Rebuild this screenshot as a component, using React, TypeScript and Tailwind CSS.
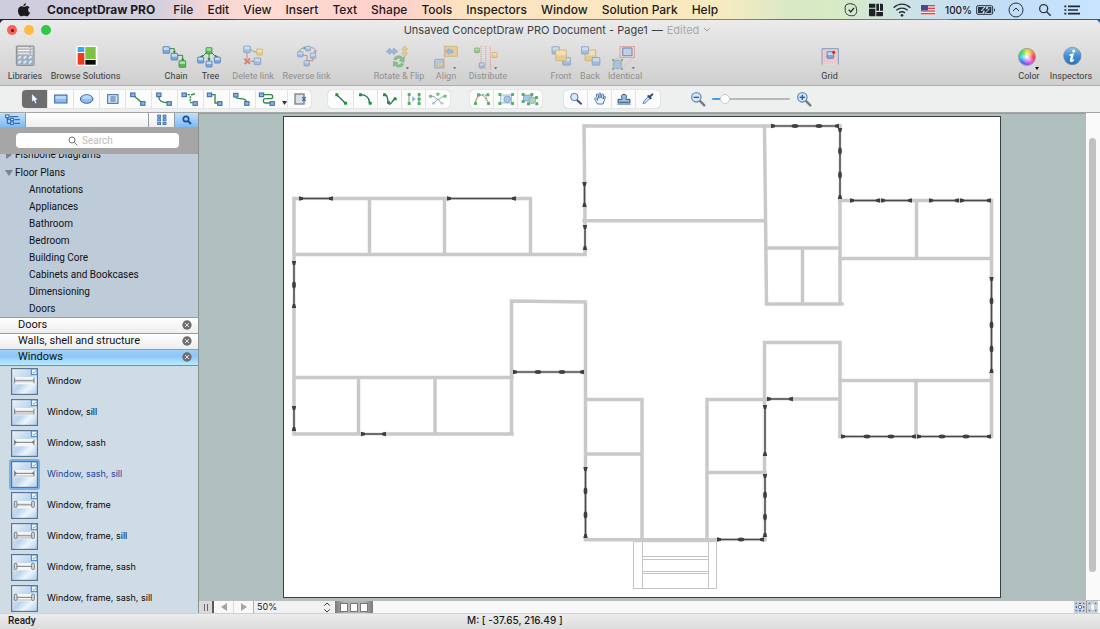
import React from 'react';

type Tone = 'blue' | 'green' | 'yellow';

const TONES: Record<Tone, [string, string, string]> = {
  blue: ['#7fa8dc', '#416fae', '#c5dbf3'],
  green: ['#58b858', '#2b7f35', '#a5e3a0'],
  yellow: ['#f0c15e', '#b98a2c', '#fbe3a8'],
};

function Node({ x, y, s = 18, tone = 'blue' }: { x: number; y: number; s?: number; tone?: Tone }) {
  const [fill, edge, light] = TONES[tone];
  return (
    <g>
      <rect x={x - s / 2} y={y - s / 2} width={s} height={s} rx={2} fill={fill} stroke={edge} strokeWidth={2} />
      <rect x={x - s / 2 + 2} y={y - s / 2 + 2} width={s - 4} height={s / 2 - 2} fill={light} />
    </g>
  );
}

function Caret({ x, y }: { x: number; y: number }) {
  return <path d={`M${x - 5} ${y - 3}h10l-5 6z`} fill="#222" />;
}

function BigIcon({ children }: { children: React.ReactNode }) {
  return (
    <svg viewBox="0 0 84 78" className="h-[26px] w-7 shrink-0" aria-hidden="true">
      {children}
    </svg>
  );
}

const green = { fill: 'none', stroke: '#2f8a3c', strokeWidth: 3 } as const;
const red = { fill: 'none', stroke: '#d2493c', strokeWidth: 3 } as const;

const LibrariesIcon = () => (
  <BigIcon>
    <rect x="16" y="6" width="53" height="58" rx="2" fill="#c9cdd1" stroke="#85888c" strokeWidth="3" />
    {[9, 17, 25].map((y) => (
      <g key={y}>
        <rect x="20" y={y} width="36" height="5" fill="#f5f5f5" stroke="#85888c" strokeWidth="1" />
        <rect x="59" y={y} width="7" height="5" fill="#f0f0f0" stroke="#85888c" strokeWidth="1" />
      </g>
    ))}
    <rect x="18" y="33" width="49" height="29" fill="#9fb0c2" />
    {[[26, 40], [42, 40], [58, 40], [26, 54], [42, 54], [58, 54]].map(([x, y]) => (
      <ellipse key={`${x}-${y}`} cx={x} cy={y} rx="7" ry="4" fill="#dcecfb" stroke="#7f97b0" transform={`rotate(-40 ${x} ${y})`} />
    ))}
  </BigIcon>
);

const BrowseIcon = () => (
  <BigIcon>
    <rect x="13" y="5" width="64" height="61" rx="6" fill="#fff" />
    <rect x="17" y="9" width="20" height="15" fill="#3da4f2" />
    <rect x="40" y="9" width="31" height="36" fill="#7dc242" />
    <rect x="17" y="27" width="20" height="35" fill="#ea3c1d" />
    <rect x="40" y="48" width="31" height="14" fill="#0b0b0b" />
  </BigIcon>
);

const ChainIcon = () => (
  <BigIcon>
    <path d="M22 14h15v10M46 34h16v14" {...green} />
    <path d="M32 22h10l-5 8zM57 44h10l-5 8z" fill="#2f8a3c" />
    <Node x={13} y={18} s={20} />
    <Node x={37} y={38} s={20} />
    <Node x={61} y={60} s={20} tone="green" />
  </BigIcon>
);

const TreeIcon = () => (
  <BigIcon>
    <path d="M30 24L16 38M36 28v22M42 24l14 14" {...green} />
    <path d="M8 38l10-6 1 9zM31 42h10l-5 9zM64 38l-10-6-1 9z" fill="#2f8a3c" />
    <Node x={36} y={20} tone="green" />
    <Node x={11} y={48} />
    <Node x={36} y={60} />
    <Node x={61} y={48} />
  </BigIcon>
);

const DeleteIcon = () => (
  <BigIcon>
    <path d="M33 17c8 0 8 8 20 7" {...green} />
    <path d="M24 27v18M32 52h13" {...red} />
    <path d="M16 44l17 15M33 43L17 60" fill="none" stroke="#d2493c" strokeWidth="6" />
    <Node x={24} y={16} s={20} />
    <Node x={62} y={24} tone="yellow" />
    <Node x={55} y={52} s={20} />
  </BigIcon>
);

const ReverseIcon = () => (
  <BigIcon>
    <path d="M20 22c0-8 6-10 14-10" {...green} />
    <path d="M32 6v12l8-6z" fill="#2f8a3c" />
    <path d="M54 11c9 0 13 3 13 12" fill="none" stroke="#c74fb0" strokeWidth="3" />
    <path d="M61 20h12l-6 8z" fill="#c74fb0" />
    <path d="M60 42v8H40M30 34h12v14" {...red} />
    <Node x={22} y={31} s={16} />
    <Node x={45} y={14} s={14} />
    <Node x={60} y={35} s={16} />
    <Node x={41} y={58} s={16} />
  </BigIcon>
);

const RotateIcon = () => (
  <BigIcon>
    <path d="M4 22l11-10v6h10v-6l13 10-13 10v-6H15v6z" fill="#6f9dd8" stroke="#416fae" strokeWidth="1.5" />
    <path d="M59 6l9 10h-5v12h5l-9 10-9-10h5V16h-5z" fill="#f0c15e" stroke="#b98a2c" strokeWidth="1.5" />
    <path d="M26 46c4-12 20-14 27-5l5-3-1 17-14-5 5-4c-5-6-13-3-14 2zM56 60c-4 11-19 12-26 4l-5 3 1-15 13 5-4 3c4 5 11 4 13-2z" fill="#4fb558" stroke="#2b7f35" strokeWidth="1.5" />
    <Caret x={67} y={73} />
  </BigIcon>
);

const AlignIcon = () => (
  <BigIcon>
    <rect x="39" y="7" width="37" height="30" rx="2" fill="#f0c15e" stroke="#b98a2c" strokeWidth="2" />
    <path d="M40 22l11-9v5h12v9H51v5z" fill="#6f9dd8" stroke="#416fae" />
    <rect x="8" y="46" width="26" height="26" rx="2" fill="#9fc1ea" stroke="#416fae" strokeWidth="2" />
    <path d="M36 60l-10-8v5H14v7h12v5z" fill="#f0c15e" stroke="#b98a2c" />
    <path d="M37 4v72" stroke="#e0544a" strokeWidth="2" strokeDasharray="4 2" />
    <Caret x={68} y={73} />
  </BigIcon>
);

const DistributeIcon = () => (
  <BigIcon>
    <path d="M21 6v70M35 6v70M49 6v70" stroke="#e0544a" strokeWidth="2" strokeDasharray="4 2" />
    <Node x={9} y={19} s={14} tone="green" />
    <Node x={62} y={33} s={15} tone="yellow" />
    <Node x={23} y={64} s={15} />
    <Caret x={65} y={73} />
  </BigIcon>
);

const FrontIcon = () => (
  <BigIcon>
    <Node x={26} y={19} s={22} />
    <Node x={59} y={52} s={23} />
    <Node x={42} y={34} s={32} tone="yellow" />
  </BigIcon>
);

const BackIcon = () => (
  <BigIcon>
    <Node x={43} y={34} s={32} tone="yellow" />
    <Node x={27} y={19} s={22} />
    <Node x={60} y={52} s={23} />
  </BigIcon>
);

const IdenticalIcon = () => (
  <BigIcon>
    <path d="M26 40L6 50M40 40l-8 10M70 40L34 72" stroke="#e0544a" strokeWidth="1.5" strokeDasharray="3 2" />
    <rect x="27" y="7" width="44" height="33" fill="#e9d3d3" stroke="#cf6058" strokeWidth="2" />
    <rect x="35" y="12" width="28" height="23" rx="2" fill="#a9c8ec" stroke="#4e6f9c" strokeWidth="4" />
    <circle cx="19" cy="61" r="13" fill="#8db4e2" stroke="#416fae" strokeWidth="2" />
    {[[6, 48], [32, 48], [6, 74], [32, 74]].map(([x, y]) => (
      <rect key={`${x}-${y}`} x={x - 3} y={y - 3} width="7" height="7" fill="#3fa647" />
    ))}
    <Caret x={67} y={73} />
  </BigIcon>
);

const GridIcon = () => (
  <BigIcon>
    <rect x="16" y="12" width="52" height="50" fill="#efd9d9" />
    {[17, 22, 27, 32, 37, 42, 47, 52, 57].map((y) => (
      <path key={y} d={`M17 ${y}h50`} stroke="#e09a98" strokeWidth="1" />
    ))}
    {[25, 33, 41, 49, 57].map((x) => (
      <path key={x} d={`M${x} 14v48`} stroke="#ecbcba" strokeWidth="1" />
    ))}
    <path d="M18 62V14h49v48" fill="none" stroke="#7d9fc4" strokeWidth="3" />
    <Node x={43} y={33} s={20} />
    <circle cx="53" cy="25" r="5" fill="#d8301e" />
  </BigIcon>
);

const ColorIcon = () => (
  <span className="relative flex h-[26px] w-7 items-center justify-center pr-1">
    <span className="size-[18px] rounded-full border border-[#9a9a9a] bg-[radial-gradient(circle,#ffffff_0%,#ffffff00_60%),conic-gradient(#e8e040,#ff9a30,#f03050,#f050e0,#9050f0,#4070f0,#30d0f0,#30e050,#e8e040)]" />
    <svg viewBox="0 0 6 4" className="absolute right-[3px] bottom-0 h-1 w-1.5" aria-hidden="true">
      <path d="M1 1h4L3 4z" fill="#111" />
    </svg>
  </span>
);

const InspectorsIcon = () => (
  <BigIcon>
    <defs>
      <linearGradient id="info" x1="0" y1="0" x2="0" y2="1">
        <stop offset="0" stopColor="#8cc4ee" />
        <stop offset="0.5" stopColor="#3b8fd6" />
        <stop offset="1" stopColor="#2a72c0" />
      </linearGradient>
    </defs>
    <circle cx="46" cy="36" r="26" fill="url(#info)" stroke="#77828c" strokeWidth="2" />
    <circle cx="50" cy="21" r="4.500" fill="#fff" />
    <path d="M38 31l13-3-5 20 6-3-1 5c-7 6-15 5-12-4l3-11-5 1z" fill="#fff" />
  </BigIcon>
);

function Tool({ label, icon, width, dim }: { label: string; icon: React.ReactNode; width: string; dim?: boolean }) {
  return (
    <button type="button" disabled={dim} className={`flex shrink-0 flex-col items-center ${width}`}>
      <span className={dim ? 'opacity-60' : ''}>{icon}</span>
      <span className={`font-[Roboto,sans-serif] text-[9px] leading-3 whitespace-nowrap ${dim ? 'text-[#8f8f8f]' : 'text-[#3a3a3a]'}`}>
        {label}
      </span>
    </button>
  );
}

function Cell({ label, children, active, width = 'w-6', last }: { label: string; children: React.ReactNode; active?: boolean; width?: string; last?: boolean }) {
  return (
    <button
      type="button"
      aria-label={label}
      className={`flex h-[18px] items-center justify-center ${width} ${active ? 'bg-[#6e6e6e]' : ''} ${last ? '' : 'border-r border-[#e3e3e3]'}`}
    >
      <svg viewBox="0 0 78 54" className="h-[18px] w-[26px] shrink-0">{children}</svg>
    </button>
  );
}

function CellGroup({ children }: { children: React.ReactNode }) {
  return <div className="flex shrink-0 overflow-hidden rounded bg-[#fcfcfc] shadow-[0_0_1px_rgba(0,0,0,0.35)]">{children}</div>;
}

const Pin = ({ x, y }: { x: number; y: number }) => (
  <rect x={x - 6} y={y - 5} width="13" height="11" fill="#8db4e2" stroke="#3566a8" strokeWidth="3" />
);
const Dot = ({ x, y }: { x: number; y: number }) => <rect x={x - 4} y={y - 4} width="9" height="9" rx="2" fill="#149a2c" />;
const line = { fill: 'none', stroke: '#2f8a48', strokeWidth: 4 } as const;
const ink = { fill: 'none', stroke: '#2c6a6e', strokeWidth: 4 } as const;

function Magnifier({ sign }: { sign?: 'plus' | 'minus' }) {
  return (
    <svg viewBox="0 0 48 48" className="size-4 shrink-0" aria-hidden="true">
      <path d="M29 29l14 14" stroke="#707a86" strokeWidth="7" strokeLinecap="round" />
      <circle cx="19" cy="19" r="14" fill="#d6e8f8" stroke="#6f8db4" strokeWidth="4" />
      {sign && <path d="M11 19h16" stroke="#1f5fb4" strokeWidth="4" />}
      {sign === 'plus' && <path d="M19 11v16" stroke="#1f5fb4" strokeWidth="4" />}
    </svg>
  );
}

const MENUS = ['File', 'Edit', 'View', 'Insert', 'Text', 'Shape', 'Tools', 'Inspectors', 'Window', 'Solution Park', 'Help'];

function MenuBar() {
  return (
    <nav className="flex h-[19px] shrink-0 items-center bg-[linear-gradient(90deg,#cecddc_0%,#d3cfdd_14%,#f3d5d6_19%,#ffdcd2_24%,#ffcfc9_36%,#fbe3c2_42%,#fae8bf_60%,#f5ebc0_66%,#d9e8c6_72%,#d6ebc4_76%,#cfe3e6_82%,#c2dcf5_90%,#c9e4fd_100%)] pr-5 pl-[18px] text-xs leading-4 font-medium text-[#1d1a22]">
      <svg viewBox="0 0 36 42" className="h-[14px] w-3 shrink-0" aria-label="Apple">
        <path d="M24 1c0 6-4 9-8 9 0-5 3-8 8-9zM18 12c2 0 5-3 9-3 3 0 6 2 8 4-7 4-5 14 1 16-2 6-6 11-10 11-3 0-4-2-8-2s-5 2-8 2C5 40 0 31 0 23S5 10 11 10c3 0 5 2 7 2z" fill="#1b1b1f" />
      </svg>
      <span className="ml-[17px] font-bold whitespace-nowrap">ConceptDraw PRO</span>
      <div className="ml-[18px] flex gap-[14px]">
        {MENUS.map((m) => (
          <button key={m} type="button" className="whitespace-nowrap">{m}</button>
        ))}
      </div>
      <div className="ml-auto flex items-center">
        <svg viewBox="0 0 42 42" className="size-[14px]" aria-label="Skype">
          <path d="M12 3c4-2 20-1 24 8 2 4 1 8 2 12 1 8-6 17-15 15-4 0-8 0-12-3C2 30 4 24 4 20 2 12 4 4 12 3z" fill="none" stroke="#2b2b30" strokeWidth="3" />
          <path d="M14 20l6 7 10-12" fill="none" stroke="#2b2b30" strokeWidth="4" />
        </svg>
        <svg viewBox="0 0 42 42" className="ml-[11px] size-[14px]" aria-label="Layout">
          <path d="M0 2h19v12H0zM0 17h19v23H3q-3 0-3-3zM22 2h8v21h-8zM33 2h6q3 0 3 3v18h-9zM22 27h20v10q0 3-3 3H22z" fill="#1f2126" />
        </svg>
        <svg viewBox="0 0 54 42" className="ml-[10px] h-[14px] w-[18px]" aria-label="Wi-Fi">
          <path d="M2 14c15-14 35-14 50 0M10 22c10-9 24-9 34 0M18 30c5-5 13-5 18 0" fill="none" stroke="#26303a" strokeWidth="4" />
          <circle cx="27" cy="37" r="4" fill="#26303a" />
        </svg>
        <svg viewBox="0 0 42 30" className="ml-[10px] h-[10px] w-[14px]" aria-label="US keyboard">
          <rect width="42" height="30" fill="#f3e4e6" />
          {[0, 8, 16, 24].map((y) => <rect key={y} y={y} width="42" height="4" fill="#cf4a52" />)}
          <rect width="21" height="16" fill="#3c4d92" />
        </svg>
        <span className="ml-[10px] text-[10px] font-medium">100%</span>
        <svg viewBox="0 0 60 30" className="ml-1 h-[10px] w-5" aria-label="Battery charging">
          <rect x="2" y="2" width="48" height="26" rx="4" fill="none" stroke="#2a3440" strokeWidth="3" />
          <path d="M6 6h18L14 18h8l-3 6H6zM46 24H30l12-13h-8l3-5h9z" fill="#2a3440" />
          <path d="M32 3L18 17h9l-4 11 15-15h-9z" fill="#2a3440" />
          <path d="M54 10c4 2 4 8 0 10z" fill="#2a3440" />
        </svg>
        <svg viewBox="0 0 48 48" className="ml-[12px] size-4" aria-label="Updates">
          <circle cx="24" cy="24" r="21" fill="none" stroke="#2a3440" strokeWidth="3" />
          <path d="M15 27l9-9 9 9" fill="none" stroke="#2a3440" strokeWidth="3" />
        </svg>
        <svg viewBox="0 0 42 42" className="ml-[14px] size-[14px]" aria-label="Spotlight">
          <circle cx="17" cy="17" r="12" fill="none" stroke="#2a3440" strokeWidth="4" />
          <path d="M26 26l12 12" stroke="#2a3440" strokeWidth="4" />
        </svg>
        <svg viewBox="0 0 48 36" className="ml-[12px] h-3 w-4" aria-label="Notifications">
          <path d="M12 7h36M12 18h30M12 29h36" stroke="#1f2a36" strokeWidth="5" />
          <path d="M1 7h6M1 18h6M1 29h6" stroke="#1f2a36" strokeWidth="5" />
        </svg>
      </div>
    </nav>
  );
}

function TitleBar() {
  return (
    <div className="flex h-5 items-center pl-[7px]">
      <div className="flex gap-[7px]">
        <button type="button" aria-label="Close" className="flex size-[10px] items-center justify-center rounded-full bg-[#f8605a]">
          <span className="size-[3px] rounded-full bg-[#6b0f0c]" />
        </button>
        <button type="button" aria-label="Minimize" className="size-[10px] rounded-full bg-[#fdbc40]" />
        <button type="button" aria-label="Zoom" className="size-[10px] rounded-full bg-[#33c748]" />
      </div>
      <h1 className="mx-auto flex items-center gap-1 pr-9 text-[11px] leading-4 whitespace-nowrap text-[#3f3f3f]">
        <span>Unsaved ConceptDraw PRO Document - Page1</span>
        <span>—</span>
        <span className="text-[#a9a9a9]">Edited</span>
        <svg viewBox="0 0 8 6" className="h-[6px] w-2" aria-hidden="true">
          <path d="M1 1l3 3 3-3" fill="none" stroke="#a0a0a0" />
        </svg>
      </h1>
    </div>
  );
}

function Toolbar() {
  return (
    <div className="flex pt-1 pb-[3px]">
      <Tool label="Libraries" icon={<LibrariesIcon />} width="w-[50px]" />
      <Tool label="Browse Solutions" icon={<BrowseIcon />} width="w-[71px]" />
      <div className="flex pl-[37px]">
        <Tool label="Chain" icon={<ChainIcon />} width="w-9" />
        <Tool label="Tree" icon={<TreeIcon />} width="w-[33px]" />
        <Tool label="Delete link" icon={<DeleteIcon />} width="w-[52px]" dim />
        <Tool label="Reverse link" icon={<ReverseIcon />} width="w-[55px]" dim />
      </div>
      <div className="flex pl-[35px]">
        <Tool label="Rotate &amp; Flip" icon={<RotateIcon />} width="w-[60px]" dim />
        <Tool label="Align" icon={<AlignIcon />} width="w-[34px]" dim />
        <Tool label="Distribute" icon={<DistributeIcon />} width="w-[50px]" dim />
      </div>
      <div className="flex pl-[33px]">
        <Tool label="Front" icon={<FrontIcon />} width="w-[30px]" dim />
        <Tool label="Back" icon={<BackIcon />} width="w-7" dim />
        <Tool label="Identical" icon={<IdenticalIcon />} width="w-[42px]" dim />
      </div>
      <div className="flex-1" />
      <Tool label="Grid" icon={<GridIcon />} width="w-[30px]" />
      <div className="flex-1" />
      <div className="flex pr-[3px]">
        <Tool label="Color" icon={<ColorIcon />} width="w-8" />
        <Tool label="Inspectors" icon={<InspectorsIcon />} width="w-[52px]" />
      </div>
    </div>
  );
}

function DrawBar() {
  return (
    <div className="flex h-[27px] shrink-0 items-center border-b border-[#a3a6a6] bg-[#eef0ef] pl-[22px]">
      <CellGroup>
        <Cell label="Select" active width="w-[26px]">
          <path d="M29 10v27l6-5 5 10 5-3-4-9h8z" fill="#fff" stroke="#2b5da8" strokeWidth="2" />
        </Cell>
        <Cell label="Rectangle" width="w-[26px]">
          <rect x="20" y="15" width="37" height="24" fill="#8fbcec" stroke="#3566a8" strokeWidth="3" />
          <rect x="23" y="18" width="31" height="9" fill="#b9d7f5" />
        </Cell>
        <Cell label="Ellipse" width="w-[26px]">
          <ellipse cx="38" cy="27" rx="19" ry="13" fill="#8fbcec" stroke="#3566a8" strokeWidth="3" />
          <ellipse cx="38" cy="22" rx="13" ry="6" fill="#b9d7f5" />
        </Cell>
        <Cell label="Text box" width="w-[26px]">
          <rect x="23" y="14" width="31" height="26" fill="#d4e5f7" stroke="#3566a8" strokeWidth="3" />
          <path d="M31 21h16M31 27h16M31 33h16" stroke="#3566a8" strokeWidth="3" />
        </Cell>
        <Cell label="Direct connector" width="w-[26px]">
          <path d="M20 14l29 25" {...line} />
          <Pin x={20} y={14} /><Pin x={50} y={40} />
        </Cell>
        <Cell label="Arc connector" width="w-[26px]">
          <path d="M20 16c0 18 10 22 28 22" {...line} />
          <Pin x={20} y={14} /><Pin x={51} y={40} />
        </Cell>
        <Cell label="Spline connector" width="w-[26px]">
          <path d="M19 14h24c-10 6-6 14-6 24h14M44 12h10" {...line} strokeDasharray="7 3" />
          <Pin x={18} y={14} /><Pin x={51} y={40} />
        </Cell>
        <Cell label="Right-angle connector" width="w-[26px]">
          <path d="M18 14h15v25h14" {...line} />
          <Pin x={16} y={14} /><Pin x={47} y={40} />
        </Cell>
        <Cell label="Curved connector" width="w-[26px]">
          <path d="M16 16c-1 20 32 0 33 20" {...line} />
          <Pin x={17} y={15} /><Pin x={50} y={40} />
        </Cell>
        <Cell label="Rounded connector" width="w-[26px]" last>
          <path d="M16 14h28q6 0 6 6t-6 6H28q-6 0-6 6t6 7h18" {...line} />
          <Pin x={16} y={14} /><Pin x={48} y={40} />
        </Cell>
        <button type="button" aria-label="More connectors" className="flex w-[6px] items-end justify-center border-r border-[#e3e3e3] pb-[3px]">
          <svg viewBox="0 0 5 4" className="h-1 w-[5px] shrink-0"><path d="M0 0h5L2.500 4z" fill="#333" /></svg>
        </button>
        <Cell label="Container" width="w-[23px]" last>
          <rect x="24" y="12" width="27" height="30" fill="#dcdfe2" stroke="#7c8186" strokeWidth="4" />
          <path d="M46 21l10 12M56 21L46 33" stroke="#2f72c4" strokeWidth="4" />
        </Cell>
      </CellGroup>
      <div className="w-[17px] shrink-0" />
      <CellGroup>
        <Cell label="Line" width="w-[26px]">
          <path d="M26 14l25 24" {...ink} /><Dot x={26} y={14} /><Dot x={52} y={39} />
        </Cell>
        <Cell label="Arc">
          <path d="M22 14c16 0 26 8 28 24" {...ink} /><Dot x={22} y={14} /><Dot x={51} y={39} />
        </Cell>
        <Cell label="Bezier">
          <path d="M22 14c10 0 8 8 12 23s12-6 20-11" {...ink} /><Dot x={22} y={14} /><Dot x={34} y={37} /><Dot x={54} y={26} />
        </Cell>
        <Cell label="Mirror">
          <g opacity="0.75">
            <path d="M24 12v30M54 12v30" {...line} strokeWidth={3} /><path d="M34 18v18l10-9z" fill="#6f9dd8" />
            <Dot x={24} y={13} /><Dot x={24} y={40} /><Dot x={54} y={13} /><Dot x={54} y={27} /><Dot x={54} y={40} />
          </g>
        </Cell>
        <Cell label="Trim" last>
          <g opacity="0.6">
            <path d="M16 18c14 0 16 8 22 10s10-10 24-9M38 27L26 40M38 27l12 13" {...ink} strokeWidth={3} />
            <Dot x={16} y={18} /><Dot x={38} y={12} /><Dot x={60} y={18} /><circle cx="25" cy="40" r="4" fill="#89a" /><circle cx="51" cy="40" r="4" fill="#89a" />
          </g>
        </Cell>
      </CellGroup>
      <div className="w-5 shrink-0" />
      <CellGroup>
        <Cell label="Smooth">
          <g opacity="0.75">
            <path d="M18 38l8-20M30 14h18l10 24" {...line} strokeWidth={3} strokeDasharray="6 3" /><path d="M20 38c4-26 26-30 32-6" fill="none" stroke="#d2605a" strokeWidth="3" />
            <Dot x={28} y={14} /><Dot x={56} y={14} /><Dot x={19} y={40} /><Dot x={58} y={40} />
          </g>
        </Cell>
        <Cell label="Combine">
          <g opacity="0.75">
            <rect x="22" y="15" width="34" height="24" fill="#d8e6f4" stroke="#6b8fbf" strokeWidth="2" /><circle cx="43" cy="28" r="10" fill="#8db4e2" stroke="#47709f" strokeWidth="2" />
            <Dot x={20} y={13} /><Dot x={58} y={13} /><Dot x={20} y={40} /><Dot x={58} y={40} />
          </g>
        </Cell>
        <Cell label="Union" last>
          <g opacity="0.75">
            <rect x="20" y="15" width="24" height="18" fill="#8db4e2" stroke="#47709f" strokeWidth="2" /><circle cx="46" cy="31" r="10" fill="#9cc59f" stroke="#47709f" strokeWidth="2" />
            <Dot x={18} y={13} /><Dot x={44} y={13} /><Dot x={18} y={34} /><Dot x={58} y={22} /><Dot x={34} y={41} /><Dot x={59} y={41} />
          </g>
        </Cell>
      </CellGroup>
      <div className="w-[22px] shrink-0" />
      <CellGroup>
        <Cell label="Zoom tool">
          <path d="M42 30l12 11" stroke="#37507a" strokeWidth="6" strokeLinecap="round" /><circle cx="34" cy="21" r="11" fill="#d9eafa" stroke="#4a78b4" strokeWidth="3" />
        </Cell>
        <Cell label="Pan">
          <path d="M32 42l-9-14c-2-4 3-5 5-2l4 5-4-16c-1-4 4-5 5-1l3 11V12c0-4 5-4 5 0l1 12 3-10c1-4 6-2 5 1l-2 12 3-6c2-3 6-1 4 2l-7 19z" fill="#eaf3fc" stroke="#2c5f9e" strokeWidth="2.500" />
        </Cell>
        <Cell label="Stamp">
          <path d="M33 25c-8-16 20-16 12 0v3h12v9H21v-9h12z" fill="#9cbde4" stroke="#2c5580" strokeWidth="3" /><path d="M19 42h40" stroke="#2c5580" strokeWidth="3" />
        </Cell>
        <Cell label="Eyedropper" last>
          <path d="M24 41l3-8 14-14 5 5-14 14z" fill="#cfe3f6" stroke="#4a78b4" strokeWidth="2.500" /><path d="M40 18l7 7M45 20l7-7" stroke="#274a7c" strokeWidth="6" strokeLinecap="round" />
        </Cell>
      </CellGroup>
      <div className="flex shrink-0 items-center pl-[30px]">
        <button type="button" aria-label="Zoom out"><Magnifier sign="minus" /></button>
        <input
          type="range"
          aria-label="Zoom level"
          min={0}
          max={100}
          defaultValue={12}
          className="mx-[6px] h-[2px] w-[78px] appearance-none rounded-full bg-[linear-gradient(90deg,#3f9ff5_16%,#b7b9b9_16%)] [&::-webkit-slider-thumb]:size-[10px] [&::-webkit-slider-thumb]:appearance-none [&::-webkit-slider-thumb]:rounded-full [&::-webkit-slider-thumb]:border [&::-webkit-slider-thumb]:border-[#c8c8c8] [&::-webkit-slider-thumb]:bg-white"
        />
        <button type="button" aria-label="Zoom in"><Magnifier sign="plus" /></button>
      </div>
    </div>
  );
}

const CATEGORIES = ['Annotations', 'Appliances', 'Bathroom', 'Bedroom', 'Building Core', 'Cabinets and Bookcases', 'Dimensioning', 'Doors'];

const LIBRARIES = [
  { name: 'Doors', open: false },
  { name: 'Walls, shell and structure', open: false },
  { name: 'Windows', open: true },
];

const SHAPES = [
  { name: 'Window', sash: false, sill: false, frame: false },
  { name: 'Window, sill', sash: false, sill: true, frame: false },
  { name: 'Window, sash', sash: true, sill: false, frame: false },
  { name: 'Window, sash, sill', sash: true, sill: true, frame: false, selected: true },
  { name: 'Window, frame', sash: false, sill: false, frame: true },
  { name: 'Window, frame, sill', sash: false, sill: true, frame: true },
  { name: 'Window, frame, sash', sash: true, sill: false, frame: true },
  { name: 'Window, frame, sash, sill', sash: true, sill: true, frame: true },
];

function ShapeThumb({ sash, sill, frame }: { sash: boolean; sill: boolean; frame: boolean }) {
  return (
    <svg viewBox="0 0 81 81" className="size-[27px] shrink-0" aria-hidden="true">
      <defs>
        <linearGradient id="tile" x1="0" y1="0" x2="1" y2="1">
          <stop offset="0" stopColor="#e9f2fa" />
          <stop offset="0.5" stopColor="#bcd4ec" />
          <stop offset="0.7" stopColor="#edf5fc" />
          <stop offset="1" stopColor="#a9caea" />
        </linearGradient>
      </defs>
      <rect x="1.500" y="1.500" width="78" height="78" fill="url(#tile)" stroke="#5c7690" strokeWidth="4" />
      <rect x="61" y="3" width="17" height="17" fill="#f3f9ff" stroke="#3f84c4" strokeWidth="3" />
      <path d="M65 12l4 4 6-8" fill="none" stroke="#3f84c4" strokeWidth="2" />
      <rect x="11" y="27" width="58" height="22" fill="#f4f6f8" />
      <path d="M11 37h58" stroke="#777b7f" strokeWidth={sash ? 3 : 2.500} />
      {!sash && <path d="M11 41h58" stroke="#9a9da0" strokeWidth="1.500" />}
      {sill && <path d="M11 45h58" stroke="#9a9da0" strokeWidth="2" />}
      {sash && <path d="M12 32l6 5-6 5zM68 32l-6 5 6 5z" fill="#6a6e72" />}
      {frame ? (
        <g fill="#dcdcdc" stroke="#6a6e72" strokeWidth="2.500">
          <rect x="10" y="28" width="8" height="18" rx="2" />
          <rect x="62" y="28" width="8" height="18" rx="2" />
        </g>
      ) : (
        <path d="M11 29v17M69 29v17" stroke="#6a6e72" strokeWidth="2.500" />
      )}
    </svg>
  );
}

function Sidebar() {
  return (
    <aside className="flex w-[199px] shrink-0 flex-col border-r border-[#8b9090] bg-[#becbd8]">
      <div className="flex h-[14px] shrink-0 bg-[linear-gradient(#ffffff,#eeeeee)]">
        <button type="button" aria-label="Tree view" className="flex w-[26px] items-center justify-center border-r border-[#8c9aa8] bg-[linear-gradient(#bfe0fb,#7fbaf0)]">
          <svg viewBox="0 0 48 36" className="h-3 w-4">
            <path d="M7 8v20h12M7 16h12M14 8h26M28 17h17M28 28h17" fill="none" stroke="#1d5fa8" strokeWidth="3" />
            <rect x="2" y="3" width="10" height="8" fill="#fff" stroke="#1d5fa8" strokeWidth="3" />
            <rect x="17" y="13" width="8" height="7" fill="#fff" stroke="#1d5fa8" strokeWidth="3" />
            <rect x="17" y="24" width="8" height="7" fill="#fff" stroke="#1d5fa8" strokeWidth="3" />
          </svg>
        </button>
        <div className="flex-1" />
        <button type="button" aria-label="Grid view" className="flex w-[26px] items-center justify-center border-l border-[#9a9a9a]">
          <svg viewBox="0 0 30 36" className="h-3 w-[10px]">
            {[3, 14, 25].map((y) => (
              <g key={y} fill="#7fa8dc" stroke="#2a60a8" strokeWidth="2">
                <rect x="2" y={y} width="9" height="7" />
                <rect x="18" y={y} width="9" height="7" />
              </g>
            ))}
          </svg>
        </button>
        <button type="button" aria-label="Search view" className="flex w-6 items-center justify-center border-l border-[#8c9aa8] bg-[linear-gradient(#bfe0fb,#7fbaf0)]">
          <svg viewBox="0 0 30 30" className="size-[10px]">
            <circle cx="12" cy="12" r="8" fill="none" stroke="#1a4f9c" strokeWidth="5" />
            <path d="M18 18l9 9" stroke="#1a4f9c" strokeWidth="6" />
          </svg>
        </button>
      </div>
      <div className="flex h-[27px] shrink-0 items-center bg-[#a6a6a6] pr-[19px] pl-4">
        <label className="flex h-[15px] min-w-0 flex-1 items-center gap-1 rounded-sm bg-white pl-[52px]">
          <svg viewBox="0 0 30 30" className="size-[10px] shrink-0" aria-hidden="true">
            <circle cx="12" cy="12" r="9" fill="none" stroke="#6f6f6f" strokeWidth="3" />
            <path d="M19 19l9 9" stroke="#6f6f6f" strokeWidth="3" />
          </svg>
          <input type="search" aria-label="Search" placeholder="Search" className="w-full min-w-0 bg-transparent font-[Roboto,sans-serif] text-[10px] leading-3 outline-none placeholder:text-[#bcbcbc]" />
        </label>
      </div>
      <div className="h-[163px] shrink-0 overflow-hidden font-[Roboto,sans-serif] text-[10px] leading-[17px] text-[#0f1216]">
        <ul className="-mt-2">
          <li className="flex items-center gap-[3px] pl-[6px]">
            <svg viewBox="0 0 6 8" className="h-2 w-[6px]" aria-hidden="true"><path d="M0 0v8l6-4z" fill="#7d8389" /></svg>
            Fishbone Diagrams
          </li>
          <li>
            <div className="flex items-center gap-[2px] pt-px pl-[5px]">
              <svg viewBox="0 0 8 6" className="h-[6px] w-2" aria-hidden="true"><path d="M0 0h8L4 6z" fill="#7d8389" /></svg>
              Floor Plans
            </div>
            <ul className="pl-[29px]">
              {CATEGORIES.map((c) => <li key={c}>{c}</li>)}
            </ul>
          </li>
        </ul>
      </div>
      <div className="shrink-0 border-b border-[#83898f]">
        {LIBRARIES.map(({ name, open }) => (
          <div key={name} className={`flex h-4 items-center justify-between border-t border-[#9a9a9a] pr-[6px] pb-px pl-[18px] font-[Roboto,sans-serif] text-[11px] leading-[14px] text-[#101010] ${open ? 'bg-[linear-gradient(#9fd0f7_0%,#8cc6f8_40%,#b9ecff_100%)]' : 'bg-[linear-gradient(#ffffff,#ededed)]'}`}>
            <span>{name}</span>
            <button type="button" aria-label={`Close ${name}`}>
              <svg viewBox="0 0 30 30" className="size-[10px]">
                <circle cx="15" cy="15" r="14" fill="#6c6f72" />
                <path d="M9 9l12 12M21 9L9 21" stroke="#e4e6e8" strokeWidth="3" />
              </svg>
            </button>
          </div>
        ))}
      </div>
      <ul className="min-h-0 flex-1 overflow-hidden bg-[#cfdce5]">
        {SHAPES.map(({ name, selected, ...parts }) => (
          <li key={name} className={`flex h-[31px] items-center gap-1 pl-[9px] text-[9px] leading-4 ${selected ? 'text-[#17459c]' : 'text-[#080808]'}`}>
            <span className={`rounded-[3px] p-[2px] ${selected ? 'bg-[#79b0ea]' : ''}`}>
              <ShapeThumb {...parts} />
            </span>
            <span className="pb-px pl-[3px]">{name}</span>
          </li>
        ))}
      </ul>
    </aside>
  );
}

type Opening = { x: number; y: number; len: number; vertical?: boolean; joints?: number[] };

const OPENINGS: Opening[] = [
  { x: 299, y: 198.5, len: 34 },
  { x: 447, y: 198.5, len: 69 },
  { x: 294, y: 261, len: 47, vertical: true, joints: [24] },
  { x: 294, y: 406, len: 25, vertical: true },
  { x: 361, y: 434, len: 25 },
  { x: 513, y: 372, len: 71, joints: [25, 49] },
  { x: 584.5, y: 182, len: 25, vertical: true },
  { x: 585, y: 225, len: 25, vertical: true },
  { x: 771, y: 126, len: 68, joints: [24, 48] },
  { x: 840, y: 128, len: 71, vertical: true, joints: [23, 47] },
  { x: 850, y: 200.5, len: 30 },
  { x: 881, y: 200.5, len: 31 },
  { x: 929, y: 200.5, len: 30 },
  { x: 960, y: 200.5, len: 31 },
  { x: 991.5, y: 277, len: 96, vertical: true, joints: [24, 48, 72] },
  { x: 841, y: 436.5, len: 75, joints: [26, 50] },
  { x: 917, y: 436.5, len: 74, joints: [25, 49] },
  { x: 767, y: 399, len: 26 },
  { x: 765, y: 405, len: 51, vertical: true },
  { x: 765, y: 474, len: 63, vertical: true, joints: [21, 43] },
  { x: 717, y: 539.5, len: 47, joints: [24] },
  { x: 585.5, y: 467, len: 71, vertical: true, joints: [24, 48] },
];

function OpeningMark({ x, y, len, vertical, joints = [] }: Opening) {
  return (
    <g transform={`translate(${x} ${y})${vertical ? ' rotate(90)' : ''}`}>
      <path d={`M0 0H${len}`} stroke="#fff" strokeWidth="4.500" />
      <path d={`M1 0H${len - 1}`} stroke="#a0a0a0" strokeWidth="2.400" />
      <path d={`M1 0H${len - 1}`} stroke="#4a4a4a" strokeWidth="1.200" />
      <path d={`M0 -2.200L4 -1.200V1.200L0 2.200zM${len} -2.200l-4 1v2.400l4 1z`} fill="#3e3e3e" />
      {joints.map((j) => <ellipse key={j} cx={j} cy="0" rx="3.400" ry="1.900" fill="#404040" />)}
    </g>
  );
}

function FloorPlan() {
  return (
    <svg viewBox="284 117 716 480" className="h-full w-full border border-[#3a4040] bg-white" role="img" aria-label="Floor plan">
      <g fill="none" stroke="#c9c9c9" strokeWidth="3.500" strokeLinecap="square">
        <path d="M294 434V198.500H530.500V254.500M369.500 198.500v56M444.500 198.500v56M294 254.500H585M294 377.500H512M358.500 377.500V434M435 377.500V434M294 434H512M511.500 434V301l73.500 1" />
        <path d="M585 254V221L584 126H840V304M584 220.700H765M764.500 126L766.500 304H842M766 248H840M802.500 248V304" />
        <path d="M840 200.500H991.500V436.500M916.500 200.500V258.500M840 258.500H991.500M840 380.500H991.500M916 380.500V436.500M840 436.500H991.500" />
        <path d="M840 436V342.500H764.500V539.500M764.500 399H840M707 539.500V399.500H765M707 472.500H765M585.500 304V539.700H765M585.500 399.500H642V539.500M585.500 454H642" />
        <path d="M635 540.500H714" />
      </g>
      <g fill="none" stroke="#c4c4c4" strokeWidth="1">
        <path d="M633.500 542v46.500h83V542M642.500 542v46.500M708.500 542v46.500M642.500 556.500h66M642.500 559.500h66M642.500 571.500h66M642.500 573.500h66" />
      </g>
      {OPENINGS.map((o) => <OpeningMark key={`${o.x}-${o.y}`} {...o} />)}
    </svg>
  );
}

function Workspace() {
  return (
    <section className="flex min-w-0 flex-1 flex-col bg-[#fafafa]">
      <div className="flex min-h-0 flex-1">
        <div className="min-w-0 flex-1 border-t border-[#8fa09f] bg-[#afbfbe] pt-[2px] pr-[85px] pb-[2px] pl-[84px]">
          <FloorPlan />
        </div>
        <div className="flex w-[14px] shrink-0 flex-col items-center pt-[25px] pr-px">
          <div className="h-[94%] w-[7px] rounded-full bg-[#c1c1c1]" />
        </div>
      </div>
      <div className="flex h-[13px] shrink-0 items-stretch border-t border-[#b9bdbd] bg-[#f8f8f8]">
        <button type="button" aria-label="Resize panels" className="flex w-[15px] items-center justify-center gap-[2px] border-r-2 border-[#5a5a5a] bg-[#d9d9d9]">
          <span className="h-[7px] w-px bg-[#666]" />
          <span className="h-[7px] w-px bg-[#666]" />
        </button>
        <button type="button" aria-label="Previous page" className="flex w-5 items-center justify-center border-r border-[#dcdcdc]">
          <svg viewBox="0 0 6 8" className="h-2 w-[6px]"><path d="M6 0v8L0 4z" fill="#a5a5a5" /></svg>
        </button>
        <button type="button" aria-label="Next page" className="flex w-5 items-center justify-center border-r border-[#b0b0b0]">
          <svg viewBox="0 0 6 8" className="h-2 w-[6px]"><path d="M0 0v8l6-4z" fill="#a5a5a5" /></svg>
        </button>
        <div className="relative flex w-[81px] items-center bg-[#f1f1f1]">
          <select aria-label="Zoom" className="w-full appearance-none bg-transparent pl-[3px] text-[9px] leading-3 text-[#1c1c1c]">
            <option>50%</option>
          </select>
          <svg viewBox="0 0 8 12" className="pointer-events-none absolute right-1 h-[11px] w-2" aria-hidden="true">
            <path d="M1 4l3-3 3 3M1 8l3 3 3-3" fill="none" stroke="#2a2a2a" />
          </svg>
        </div>
        <button type="button" aria-label="Page tabs" className="flex w-[38px] items-center justify-center gap-[2px] bg-[linear-gradient(90deg,#7b7b7b,#b4b4b4_25%,#b4b4b4_75%,#7b7b7b)]">
          <span className="h-[9px] w-2 border border-[#777] bg-white" />
          <span className="h-[9px] w-2 border border-[#777] bg-white" />
          <span className="h-[9px] w-2 border border-[#777] bg-white" />
        </button>
        <div className="flex-1" />
        <button type="button" aria-label="Fit page" className="flex w-[13px] items-center justify-center border-r border-[#9a9a9a] bg-[#d2d2d2]">
          <svg viewBox="0 0 30 30" className="size-[10px]">
            <circle cx="15" cy="15" r="5" fill="#fff" stroke="#4a7fc0" strokeWidth="3" />
            <path d="M15 0l4 6h-8zM15 30l4-6h-8zM0 15l6-4v8zM30 15l-6-4v8zM2 2h6l-6 6zM28 2h-6l6 6zM2 28h6l-6-6zM28 28h-6l6-6z" fill="#2f68b0" />
          </svg>
        </button>
        <button type="button" aria-label="Fit width" className="mr-[2px] flex w-[11px] items-center justify-center bg-[#d2d2d2]">
          <svg viewBox="0 0 27 30" className="h-[10px] w-[9px]">
            <rect x="8" y="6" width="12" height="18" rx="3" fill="#fff" stroke="#9db9da" strokeWidth="2" />
            <path d="M2 2h6l-6 6zM25 2h-6l6 6zM2 28h6l-6-6zM25 28h-6l6-6z" fill="#2f68b0" />
          </svg>
        </button>
      </div>
    </section>
  );
}

export default function App() {
  return (
    <div className="flex h-screen flex-col overflow-hidden bg-[linear-gradient(90deg,#231f4d_0%,#2a2350_19%,#b03a3a_22%,#9c2a2a_40%,#a07a3a_43%,#a3813f_68%,#4a6fa0_72%,#5d9440_80%,#8a9a3a_86%,#3a5f96_87%,#2d5aa0_100%)] font-[Inter,sans-serif] text-[#222]">
      <MenuBar />
      <div className="mt-px flex min-h-0 flex-1 flex-col rounded-t-[5px] bg-[#e9e9e9]">
        <header className="shrink-0 rounded-t-[5px] border-b border-[#aeaeae] bg-[linear-gradient(#ebebeb,#cfcfcf)]">
          <TitleBar />
          <Toolbar />
        </header>
        <DrawBar />
        <main className="flex min-h-0 flex-1">
          <Sidebar />
          <Workspace />
        </main>
        <footer className="flex h-4 shrink-0 items-center border-t border-[#d0d0d0] bg-[linear-gradient(#ececec,#dcdcdc)] pb-[2px] pl-2 text-[10px] leading-[13px] font-medium whitespace-nowrap text-[#1a1a1a]">
          <span className="w-[459px] shrink-0 font-[Roboto,sans-serif]">Ready</span>
          <span>M: [ -37.65, 216.49 ]</span>
        </footer>
      </div>
    </div>
  );
}
